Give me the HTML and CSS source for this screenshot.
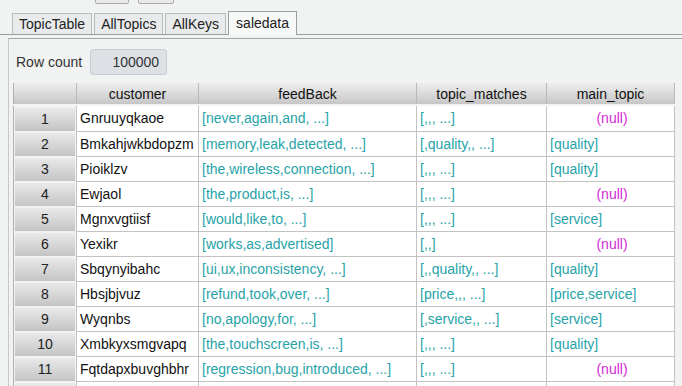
FILE: index.html
```html
<!DOCTYPE html>
<html lang="en">
<head>
    <meta charset="UTF-8">
    <title>saledata</title>
    <link rel="stylesheet" href="styles.css">
</head>
<body>
    <div class="toolbar">
        <button class="tool-btn wide1"></button>
        <button class="tool-btn wide2"></button>
    </div>

    <div class="tabs">
        <div class="tab">TopicTable</div>
        <div class="tab">AllTopics</div>
        <div class="tab">AllKeys</div>
        <div class="tab active">saledata</div>
    </div>

    <div class="panel">
        <div class="row-count">
            <span class="row-count-label">Row count</span>
            <span class="row-count-value">100000</span>
        </div>

        <table class="data-table">
            <colgroup>
                <col class="c-num">
                <col class="c-cust">
                <col class="c-feed">
                <col class="c-match">
                <col class="c-main">
            </colgroup>
            <thead>
                <tr>
                    <th class="corner"></th>
                    <th>customer</th>
                    <th>feedBack</th>
                    <th>topic_matches</th>
                    <th>main_topic</th>
                </tr>
            </thead>
            <tbody>
                <tr><td class="num"><span>1</span></td><td>Gnruuyqkaoe</td><td class="arr">[never,again,and, ...]</td><td class="arr">[,,, ...]</td><td class="null">(null)</td></tr>
                <tr><td class="num"><span>2</span></td><td>Bmkahjwkbdopzm</td><td class="arr">[memory,leak,detected, ...]</td><td class="arr">[,quality,, ...]</td><td class="arr">[quality]</td></tr>
                <tr><td class="num"><span>3</span></td><td>Pioiklzv</td><td class="arr">[the,wireless,connection, ...]</td><td class="arr">[,,, ...]</td><td class="arr">[quality]</td></tr>
                <tr><td class="num"><span>4</span></td><td>Ewjaol</td><td class="arr">[the,product,is, ...]</td><td class="arr">[,,, ...]</td><td class="null">(null)</td></tr>
                <tr><td class="num"><span>5</span></td><td>Mgnxvgtiisf</td><td class="arr">[would,like,to, ...]</td><td class="arr">[,,, ...]</td><td class="arr">[service]</td></tr>
                <tr><td class="num"><span>6</span></td><td>Yexikr</td><td class="arr">[works,as,advertised]</td><td class="arr">[,,]</td><td class="null">(null)</td></tr>
                <tr><td class="num"><span>7</span></td><td>Sbqynyibahc</td><td class="arr">[ui,ux,inconsistency, ...]</td><td class="arr">[,,quality,, ...]</td><td class="arr">[quality]</td></tr>
                <tr><td class="num"><span>8</span></td><td>Hbsjbjvuz</td><td class="arr">[refund,took,over, ...]</td><td class="arr">[price,,, ...]</td><td class="arr">[price,service]</td></tr>
                <tr><td class="num"><span>9</span></td><td>Wyqnbs</td><td class="arr">[no,apology,for, ...]</td><td class="arr">[,service,, ...]</td><td class="arr">[service]</td></tr>
                <tr><td class="num"><span>10</span></td><td>Xmbkyxsmgvapq</td><td class="arr">[the,touchscreen,is, ...]</td><td class="arr">[,,, ...]</td><td class="arr">[quality]</td></tr>
                <tr><td class="num"><span>11</span></td><td>Fqtdapxbuvghbhr</td><td class="arr">[regression,bug,introduced, ...]</td><td class="arr">[,,, ...]</td><td class="null">(null)</td></tr>
                <tr><td class="num"><span></span></td><td></td><td></td><td></td><td></td></tr>
            </tbody>
        </table>
    </div>
</body>
</html>
```

FILE: styles.css
```css
html, body {
    height: 100%;
    overflow: hidden;
}

body {
    margin: 0;
    display: flex;
    flex-direction: column;
    background: #f1f2f2;
    font-family: "Liberation Sans", Arial, sans-serif;
    font-size: 14px;
    color: #111;
}

/* toolbar buttons, cut off at the top of the window */
.toolbar {
    flex: none;
    height: 4px;
    overflow: hidden;
    display: flex;
    align-items: flex-end;
    gap: 9px;
    padding-left: 95px;
}

.tool-btn {
    height: 24px;
    padding: 0;
    border: 1px solid #a9a9a9;
    border-radius: 2px;
    background: #e9eaea;
    flex: none;
}

.wide1 { width: 34px; }
.wide2 { width: 36px; }

/* tab strip */
.tabs {
    flex: none;
    display: flex;
    align-items: flex-end;
    height: 22px;
    margin-top: 8px;
    padding-left: 12px;
    border-bottom: 1px solid #9c9ea0;
}

.tab {
    height: 20px;
    line-height: 20px;
    padding: 0 6px;
    margin-right: 2px;
    border: 1px solid #b9bbbc;
    border-bottom: none;
    background: #e8eaeb;
    color: #222;
}

.tab.active {
    height: 23px;
    line-height: 22px;
    padding: 0 7px;
    margin-bottom: -1px;
    background: #f7f8f8;
    border-color: #9c9ea0;
}

/* content panel */
.panel {
    flex: 1;
    min-height: 0;
    overflow: hidden;
    margin-top: 3px;
    margin-left: 8px;
    padding: 10px 0 0 4px;
    border-top: 1px solid #a4a6a8;
    border-left: 1px solid #c6c8c9;
}

.row-count {
    display: flex;
    align-items: center;
    gap: 8px;
    margin-left: 3px;
}

.row-count-label {
    color: #333;
}

.row-count-value {
    width: 68px;
    height: 24px;
    line-height: 24px;
    padding-right: 7px;
    text-align: right;
    background: #dde1e6;
    border: 1px solid #c9cdd3;
    border-radius: 3px;
    color: #333;
}

/* table */
.data-table {
    margin-top: 8px;
    border-collapse: collapse;
    table-layout: fixed;
    width: 661px;
}

.c-num { width: 63px; }
.c-cust { width: 122px; }
.c-feed { width: 218px; }
.c-match { width: 130px; }
.c-main { width: 128px; }

.data-table th {
    height: 21px;
    padding: 0;
    font-weight: normal;
    color: #111;
    background: linear-gradient(#eeeeee, #c6c6c6);
    border-left: 1px solid #f7f7f7;
    border-right: 1px solid #b9b9b9;
    border-bottom: 2px solid #f4f4f4;
}

.data-table th.corner {
    border-left: 1px solid #b0b0b0;
}

.data-table td {
    height: 24px;
    padding: 0 0 0 3px;
    border: 1px solid #c3c3c3;
    background: #fff;
    white-space: nowrap;
    overflow: hidden;
}

.data-table td.num {
    padding: 1px 1px 0 1px;
    background: #f1f2f2;
    border: none;
    border-left: 1px solid #b0b0b0;
}

.data-table td.num span {
    display: block;
    height: 23px;
    line-height: 23px;
    text-align: center;
    color: #222;
    background: linear-gradient(#e9e9e9, #c4c4c4);
}

.arr {
    color: #27a3a8;
}

.null {
    color: #d42ad4;
    text-align: center;
}
```
